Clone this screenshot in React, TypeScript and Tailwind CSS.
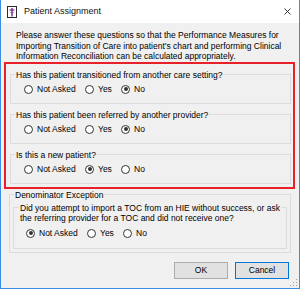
import React from 'react';

const Radio = ({ label, checked, width }: { label: string; checked?: boolean; width?: string }) => (
  <div className={`flex items-center ${width ?? ''}`}>
    <span className="w-[9px] h-[9px] shrink-0 rounded-full border border-[#333333] bg-white flex items-center justify-center">
      {checked && <span className="w-[4px] h-[4px] rounded-full bg-[#333333]" />}
    </span>
    <span className="ml-[4px] whitespace-nowrap">{label}</span>
  </div>
);

const RadioRow = ({ selected }: { selected: 'Not Asked' | 'Yes' | 'No' }) => (
  <div className="flex items-center">
    <Radio label="Not Asked" checked={selected === 'Not Asked'} width="w-[61px]" />
    <Radio label="Yes" checked={selected === 'Yes'} width="w-[36px]" />
    <Radio label="No" checked={selected === 'No'} />
  </div>
);

const Question = ({ title, selected }: { title: string; selected: 'Not Asked' | 'Yes' | 'No' }) => (
  <fieldset className="border border-[#dcdcdc] pl-[13px] pt-[4px] pb-[8px]">
    <legend className="-ml-[9px] px-[1px] whitespace-nowrap">{title}</legend>
    <RadioRow selected={selected} />
  </fieldset>
);

export default function App() {
  return (
    <div className="relative w-[300px] h-[289px] flex flex-col bg-[#f0f0f0] border-x border-b border-[#3d8ee0] font-['Liberation_Sans',Arial,sans-serif] text-[8.5px] leading-[10.5px] text-black">
      {/* Title bar */}
      <div className="h-[23px] shrink-0 bg-white flex items-center pl-[6px] pr-[8px]">
        <svg width="10" height="12" viewBox="0 0 10 12" className="shrink-0">
          <rect x="0.5" y="0.5" width="9" height="11" fill="#ffffff" stroke="#2b2b2b" />
          <path d="M5 2 V10.5" stroke="#7a2a8c" strokeWidth="1.4" />
          <path d="M2.5 4 H7.5" stroke="#7a2a8c" strokeWidth="1.2" />
          <path d="M3.5 6.5 C4.5 7.2 5.5 5.8 6.5 6.5" stroke="#7a2a8c" strokeWidth="0.8" fill="none" />
        </svg>
        <span className="ml-[7px] text-[9px] text-[#111111]">Patient Assignment</span>
        <svg width="7" height="7" viewBox="0 0 7 7" className="ml-auto">
          <path d="M0.5 0.5 L6.5 6.5 M6.5 0.5 L0.5 6.5" stroke="#222222" strokeWidth="0.9" />
        </svg>
      </div>

      {/* Intro */}
      <p className="pl-[15px] pt-[7px] whitespace-nowrap">
        Please answer these questions so that the Performance Measures for
        <br />
        Importing Transition of Care into patient's chart and performing Clinical
        <br />
        Information Reconciliation can be calculated appropriately.
      </p>

      {/* Highlighted questions */}
      <div className="ml-[3px] mr-[4px] border-2 border-[#e8202a] pl-[4px] pr-[2px] pt-[6px] pb-[3px] flex flex-col gap-[6px]">
        <Question title="Has this patient transitioned from another care setting?" selected="No" />
        <Question title="Has this patient been referred by another provider?" selected="No" />
        <Question title="Is this a new patient?" selected="Yes" />
      </div>

      {/* Denominator exception */}
      <fieldset className="mx-[8px] mt-[1px] border border-[#dcdcdc] px-[3px] pb-[3px]">
        <legend className="ml-[1px] px-[1px] whitespace-nowrap">Denominator Exception</legend>
        <fieldset className="mt-[2.5px] border border-[#dcdcdc] pl-[12px] pt-[15px] pb-[9px]">
          <legend className="-ml-[7px] px-[1px] h-[10.5px] whitespace-nowrap">
            Did you attempt to import a TOC from an HIE without success, or ask
            <br />
            the referring provider for a TOC and did not receive one?
          </legend>
          <RadioRow selected="Not Asked" />
        </fieldset>
      </fieldset>

      {/* Buttons */}
      <div className="mt-[9px] flex justify-end gap-[7px] pr-[10px]">
        <button className="w-[54px] h-[17px] bg-[#e1e1e1] border border-[#adadad] text-[8.5px] leading-none">OK</button>
        <button className="w-[54px] h-[17px] bg-[#e1e1e1] border border-[#0078d7] text-[8.5px] leading-none">Cancel</button>
      </div>

      {/* Resize grip */}
      <svg width="8" height="8" viewBox="0 0 8 8" className="absolute right-[1px] bottom-[1px]">
        <rect x="6" y="0" width="1" height="1" fill="#a0a0a0" />
        <rect x="3" y="3" width="1" height="1" fill="#a0a0a0" />
        <rect x="6" y="3" width="1" height="1" fill="#a0a0a0" />
        <rect x="0" y="6" width="1" height="1" fill="#a0a0a0" />
        <rect x="3" y="6" width="1" height="1" fill="#a0a0a0" />
        <rect x="6" y="6" width="1" height="1" fill="#a0a0a0" />
      </svg>
    </div>
  );
}
